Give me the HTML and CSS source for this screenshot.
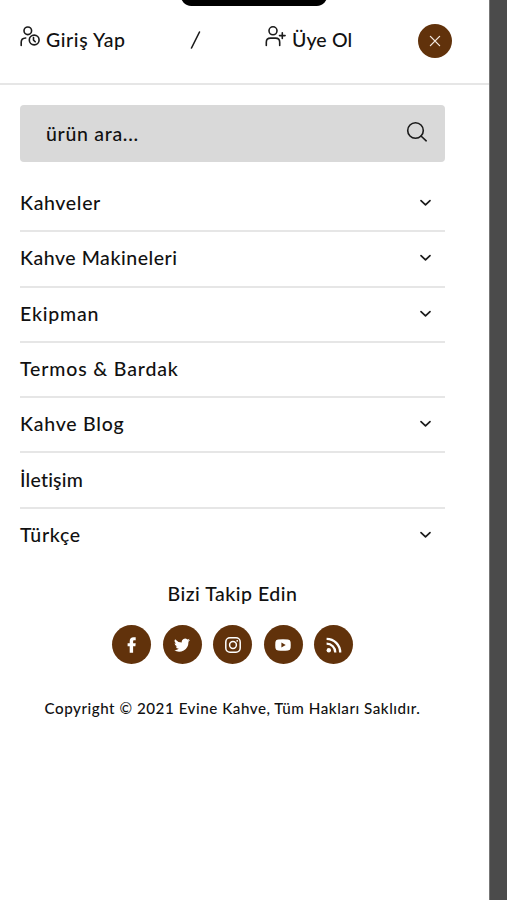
FILE: index.html
```html
<!DOCTYPE html>
<html lang="tr">
<head>
<meta charset="utf-8">
<title>Evine Kahve</title>
<link rel="stylesheet" href="styles.css">
</head>
<body>
<div class="notch"></div>
<div class="drawer">
  <header class="account">
    <a class="login"><svg width="21" height="22" viewBox="0 0 21 22"><circle cx="7.8" cy="4.8" r="3.8"/><path d="M1.2 19.5v-3.2c0-2.7 1.4-4.2 4.5-4.3"/><circle cx="14.2" cy="14" r="4.9"/><path d="M13.500 11.500v2.600l1.700 1.700"/></svg><span class="t-login">Giriş Yap</span></a>
    <span class="slash"><svg width="11" height="20" viewBox="0 0 11 20"><path d="M1.5 18L9.5 2"/></svg></span>
    <a class="register"><svg width="21" height="22" viewBox="0 0 21 22"><circle cx="8" cy="4.8" r="4"/><path d="M1.3 19.5v-3.3c0-2.6 1.6-4.1 4.2-4.1h5c2.600 0 4.200 1.500 4.200 4.100v3.300M17.300 6.800v5.600M14.500 9.600h5.600"/></svg><span class="t-register">Üye Ol</span></a>
    <button class="close"><svg width="12" height="12" viewBox="0 0 12 12"><path d="M1.400 1.400l9.200 9.200M10.600 1.400l-9.200 9.200"/></svg></button>
  </header>
  <div class="search"><span class="t-search">ürün ara...</span><svg width="22" height="22" viewBox="0 0 22 22"><circle cx="9.500" cy="9.500" r="7.800"/><path d="M15 15l5.200 4.800"/></svg></div>
  <nav class="menu">
    <a><span class="t-kahveler">Kahveler</span><svg class="chev" viewBox="0 0 12 8"><path d="M1.500 1.700L6 5.900l4.500-4.200"/></svg></a>
    <a><span class="t-makine">Kahve Makineleri</span><svg class="chev" viewBox="0 0 12 8"><path d="M1.500 1.700L6 5.900l4.500-4.200"/></svg></a>
    <a><span class="t-ekipman">Ekipman</span><svg class="chev" viewBox="0 0 12 8"><path d="M1.500 1.700L6 5.900l4.500-4.200"/></svg></a>
    <a><span class="t-termos">Termos &amp; Bardak</span></a>
    <a><span class="t-blog">Kahve Blog</span><svg class="chev" viewBox="0 0 12 8"><path d="M1.500 1.700L6 5.900l4.500-4.200"/></svg></a>
    <a><span class="t-iletisim">İletişim</span></a>
    <a><span class="t-turkce">Türkçe</span><svg class="chev" viewBox="0 0 12 8"><path d="M1.500 1.700L6 5.900l4.500-4.200"/></svg></a>
  </nav>
  <footer class="follow">
    <h2>Bizi Takip Edin</h2>
    <div class="social">
      <a><svg viewBox="0 0 16 16"><path class="fill" d="M5.700 15.800V9.300H3.600V6.300H5.700V4.400C5.700 1.800 7.200.3 9.500.3h2.200v2.900h-1.400c-.9 0-1.200.4-1.200 1.200v1.900h2.600l-.3 3H9.100v6.500z"/></svg></a>
      <a><svg viewBox="0 0 16 16"><path class="fill" d="M16 3.100a6.500 6.500 0 0 1-1.900.5A3.300 3.300 0 0 0 15.500 1.800a6.600 6.600 0 0 1-2.100.8A3.300 3.300 0 0 0 7.800 5.600 9.300 9.300 0 0 1 1.100 2.200a3.300 3.300 0 0 0 1 4.400 3.200 3.200 0 0 1-1.500-.4 3.300 3.300 0 0 0 2.600 3.200 3.300 3.300 0 0 1-1.500.1 3.300 3.300 0 0 0 3.100 2.300A6.600 6.600 0 0 1 0 13.100a9.300 9.300 0 0 0 14.400-8.300A6.700 6.700 0 0 0 16 3.100z"/></svg></a>
      <a><svg viewBox="0 0 16 16"><rect x=".8" y=".8" width="14.400" height="14.400" rx="4.200"/><circle cx="8" cy="8" r="3.400"/><circle class="fill" cx="12.200" cy="3.800" r=".9"/></svg></a>
      <a><svg viewBox="0 0 16 16"><path class="fill" fill-rule="evenodd" d="M3 2.500Q8 2 13 2.500Q15.400 2.700 15.600 5Q15.900 8 15.600 11Q15.400 13.300 13 13.500Q8 14 3 13.500Q.6 13.300.4 11Q.1 8 .4 5Q.6 2.700 3 2.500zM6.400 5.500v5L10.700 8z"/></svg></a>
      <a><svg viewBox="0 0 16 16"><circle class="fill" cx="2.800" cy="13.200" r="2.200"/><path class="rss" d="M.6 6.700a8.700 8.700 0 0 1 8.700 8.800M.6 1.800a13.600 13.600 0 0 1 13.600 13.700"/></svg></a>
    </div>
    <p>Copyright © 2021 Evine Kahve, Tüm Hakları Saklıdır.</p>
  </footer>
</div>
</body>
</html>
```
FILE: styles.css
```css
* { box-sizing: border-box; }
body {
  margin: 0;
  height: 900px;
  overflow: hidden;
  background: #4b4b4b;
  color: #111;
  font: 500 19.5px/24px Lato, "Open Sans", sans-serif;
  font-variant-ligatures: none;
}
svg { fill: none; stroke: #1b1b1b; stroke-width: 1.6; stroke-linecap: round; stroke-linejoin: round; flex: none; }
span { white-space: nowrap; }
.notch {
  position: absolute;
  top: -20px;
  left: 180px;
  width: 148px;
  height: 26px;
  border-radius: 13px / 15px;
  background: #000;
}
.drawer { width: 490px; height: 900px; background: #fff; border-right: 1px solid #777; }
.account {
  display: grid;
  grid-template-columns: 170px 75px 153px 34px;
  height: 85px;
  padding-left: 20px;
  border-bottom: 2px solid #e6e6e6;
}
.login, .register { display: flex; gap: 5px; padding-top: 26px; }
.register { gap: 6px; }
.login span, .register span { padding-top: 2px; }
.slash { padding-top: 30px; }
.slash svg { display: block; }
.close {
  display: flex;
  align-items: center;
  justify-content: center;
  width: 34px;
  height: 34px;
  margin-top: 24px;
  padding: 0;
  border: 0;
  border-radius: 50%;
  background: #61320b;
}
.close svg { stroke: #f5ebe2; stroke-width: 1.3; }
.search {
  display: flex;
  align-items: center;
  justify-content: space-between;
  width: 425px;
  height: 57px;
  margin: 20px 0 0 20px;
  padding: 0 17px 0 26px;
  border-radius: 4px;
  background: #d9d9d9;
}
.search svg { margin-top: -3px; }
.menu { width: 425px; margin: 15px 0 0 20px; }
.menu a {
  display: flex;
  align-items: center;
  justify-content: space-between;
  height: 55.3px;
  padding: 0 13px 1px 0;
  border-bottom: 2px solid #e6e6e6;
}
.menu a:last-child { border: 0; padding-bottom: 3px; }
.chev { width: 13px; height: 8px; stroke-width: 1.7; }
.t-login { letter-spacing: .6px; }
.t-register { letter-spacing: .15px; }
.t-search { letter-spacing: .7px; }
.t-kahveler { letter-spacing: .65px; }
.t-makine { letter-spacing: .53px; }
.t-ekipman { letter-spacing: .8px; }
.t-termos { letter-spacing: .85px; }
.t-blog { letter-spacing: .75px; }
.t-iletisim { letter-spacing: .2px; }
.t-turkce { letter-spacing: .7px; }
.follow { width: 425px; margin: 18px 0 0 20px; text-align: center; }
h2 { margin: 0; font: inherit; letter-spacing: .5px; }
.social { display: flex; justify-content: center; gap: 11.5px; margin-top: 19px; }
.social a {
  display: flex;
  align-items: center;
  justify-content: center;
  width: 39px;
  height: 39px;
  border-radius: 50%;
  background: #61320b;
}
.social svg { width: 16px; height: 16px; stroke: #fff; stroke-width: 1.5; }
.social .fill { fill: #fff; stroke: none; }
.social .rss { stroke-width: 2.3; stroke-linecap: butt; }
.follow p { margin: 32px 0 0; font-size: 15.2px; line-height: 24px; white-space: nowrap; letter-spacing: .52px; }
```
